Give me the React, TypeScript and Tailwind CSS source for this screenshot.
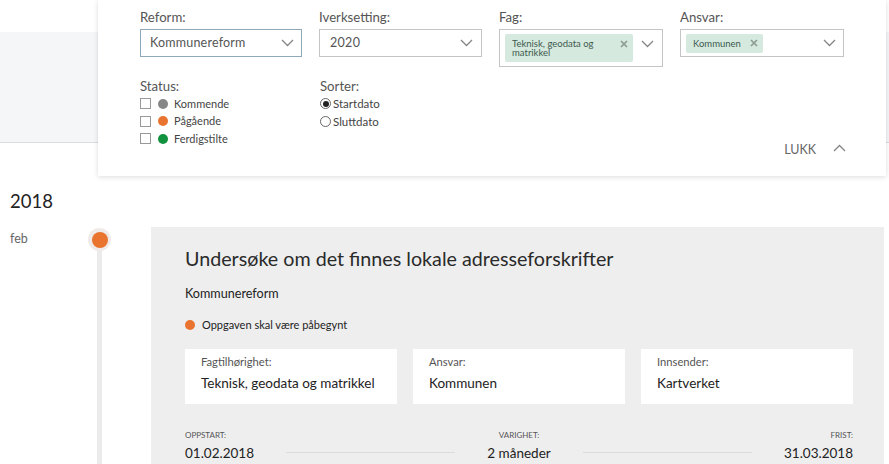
const font = { fontFamily: 'Lato, "Noto Sans", sans-serif' };

function Chevron({ up, className = "" }: { up?: boolean; className?: string }) {
  return (
    <svg width="13" height="8" viewBox="0 0 13 8" className={`shrink-0 ${className}`}>
      <polyline
        points={up ? "1,7 6.5,1.5 12,7" : "1,1 6.5,6.5 12,1"}
        fill="none"
        stroke="#858585"
        strokeWidth="1.3"
      />
    </svg>
  );
}

function Cross() {
  return (
    <svg width="8" height="8" viewBox="0 0 8 8" className="shrink-0">
      <path d="M1 1L7 7M7 1L1 7" stroke="#8c9b94" strokeWidth="1.7" />
    </svg>
  );
}

function Tag({ label, wide }: { label: string; wide?: boolean }) {
  return (
    <div
      className={`flex justify-between bg-[#d5e9de] rounded-[2px] pl-[7px] pr-[5px] ${wide ? "w-[128px] h-[28px] items-start pt-[5px]" : "h-[19px] items-center gap-[9px]"}`}
    >
      <span className={`text-[9.5px] leading-[9px] text-[#3f5a4e] ${wide ? "w-[92px]" : ""}`}>{label}</span>
      <span className={wide ? "mt-[1px]" : ""}>
        <Cross />
      </span>
    </div>
  );
}

function Field({ label, children }: { label: string; children: React.ReactNode }) {
  return (
    <div>
      <div className="text-[13.2px] leading-[22px] text-[#555] mb-[1px]">{label}</div>
      {children}
    </div>
  );
}

function Check({ color, label }: { color: string; label: string }) {
  return (
    <div className="flex items-center h-[17.5px] text-[11px] text-[#444]">
      <span className="w-[11px] h-[11px] border border-[#999] bg-white mr-[7px]" />
      <span className={`w-[10px] h-[10px] rounded-full mr-[6px] ${color}`} />
      {label}
    </div>
  );
}

function Radio({ on, label }: { on?: boolean; label: string }) {
  return (
    <div className="flex items-center h-[17.5px] text-[11.5px] text-[#444]">
      <span className="w-[11px] h-[11px] rounded-full border border-[#666] mr-[2px] flex items-center justify-center">
        {on && <span className="w-[6px] h-[6px] rounded-full bg-[#222]" />}
      </span>
      {label}
    </div>
  );
}

function InfoBox({ label, value }: { label: string; value: string }) {
  return (
    <div className="bg-white h-[55px] pl-[16px] pt-[6px]">
      <div className="text-[11.2px] leading-[14px] text-[#555]">{label}</div>
      <div className="text-[13.5px] leading-[20px] text-[#222] mt-[4px] whitespace-nowrap">{value}</div>
    </div>
  );
}

function DateCol({ label, value, align }: { label: string; value: string; align: string }) {
  return (
    <div className={align}>
      <div className="text-[8px] leading-[10px] text-[#555] uppercase">{label}</div>
      <div className="text-[13.5px] leading-[16px] text-[#222] mt-[5px]">{value}</div>
    </div>
  );
}

export default function App() {
  return (
    <div className="relative w-[889px] h-[464px] overflow-hidden bg-white" style={font}>
      {/* band behind the filter panel */}
      <div className="mt-[32px] h-[111px] bg-[#f4f6f8] border-b border-[#d9dee3]" />

      {/* filter panel */}
      <div className="absolute left-[98px] top-0 w-[788px] h-[176px] bg-white shadow-[0_1px_5px_rgba(0,0,0,0.14)] pl-[42px] pt-[6px]">
        <div className="grid grid-cols-[162px_163px_164px_164px] gap-x-[17px] w-[705px] items-start">
          <Field label="Reform:">
            <div className="flex items-center justify-between h-[28px] border border-[#8fa9bb] pl-[9px] pr-[7px]">
              <span className="text-[12.5px] tracking-[0.2px] text-[#555]">Kommunereform</span>
              <Chevron />
            </div>
          </Field>
          <Field label="Iverksetting:">
            <div className="flex items-center justify-between h-[28px] border border-[#c4c4c4] pl-[10px] pr-[8px]">
              <span className="text-[12.5px] tracking-[0.3px] text-[#555]">2020</span>
              <Chevron />
            </div>
          </Field>
          <Field label="Fag:">
            <div className="flex items-start justify-between h-[38px] border border-[#c4c4c4] pl-[5px] pr-[8px] pt-[4px]">
              <Tag label="Teknisk, geodata og matrikkel" wide />
              <Chevron className="mt-[6px]" />
            </div>
          </Field>
          <Field label="Ansvar:">
            <div className="flex items-center justify-between h-[28px] border border-[#c4c4c4] pl-[5px] pr-[7px]">
              <Tag label="Kommunen" />
              <Chevron />
            </div>
          </Field>
        </div>

        <div className="flex mt-[10px]">
          <div className="w-[180px]">
            <div className="text-[13.2px] leading-[18px] text-[#555]">Status:</div>
            <Check color="bg-[#878787]" label="Kommende" />
            <Check color="bg-[#e8742f]" label="Pågående" />
            <Check color="bg-[#12913f]" label="Ferdigstilte" />
          </div>
          <div>
            <div className="text-[13.2px] leading-[18px] text-[#555]">Sorter:</div>
            <Radio on label="Startdato" />
            <Radio label="Sluttdato" />
          </div>
        </div>

        <div className="absolute right-[40px] bottom-[16px] flex items-center text-[12.5px] text-[#666]">
          LUKK
          <Chevron up className="ml-[17px] -mt-[5px]" />
        </div>
      </div>

      {/* timeline */}
      <div className="pl-[10px] mt-[47px]">
        <div className="text-[18.5px] leading-[22px] text-[#222]">2018</div>
        <div className="flex mt-[15px]">
          <div className="w-[78px] text-[12.5px] text-[#666] pt-[3px]">feb</div>
          <div className="w-[23px] flex flex-col items-center pt-[1px] mr-[40px]">
            <div className="w-[23px] h-[23px] rounded-full bg-[#f0ebe8] flex items-center justify-center shrink-0">
              <div className="w-[16px] h-[16px] rounded-full bg-[#e8742f]" />
            </div>
            <div className="w-[5px] h-[300px] bg-[#ebebeb]" />
          </div>
          <div className="w-[733px] h-[260px] bg-[#eeeeee] pl-[34px] pr-[31px] pt-[19px]">
            <div className="text-[19.7px] leading-[26px] text-[#2a2a2a]">Undersøke om det finnes lokale adresseforskrifter</div>
            <div className="text-[12.6px] leading-[16px] text-[#222] mt-[14px]">Kommunereform</div>
            <div className="flex items-center text-[11px] leading-[14px] text-[#222] mt-[16px]">
              <span className="w-[10px] h-[10px] rounded-full bg-[#e8742f] mr-[7px]" />
              Oppgaven skal være påbegynt
            </div>
            <div className="grid grid-cols-3 gap-[16px] mt-[17px]">
              <InfoBox label="Fagtilhørighet:" value="Teknisk, geodata og matrikkel" />
              <InfoBox label="Ansvar:" value="Kommunen" />
              <InfoBox label="Innsender:" value="Kartverket" />
            </div>
            <div className="flex items-end mt-[26px]">
              <DateCol label="Oppstart:" value="01.02.2018" align="text-left" />
              <div className="flex-1 h-px bg-[#dcdcdc] mx-[32px] mb-[8px]" />
              <DateCol label="Varighet:" value="2 måneder" align="text-center" />
              <div className="flex-1 h-px bg-[#dcdcdc] mx-[32px] mb-[8px]" />
              <DateCol label="Frist:" value="31.03.2018" align="text-right" />
            </div>
          </div>
        </div>
      </div>
    </div>
  );
}
